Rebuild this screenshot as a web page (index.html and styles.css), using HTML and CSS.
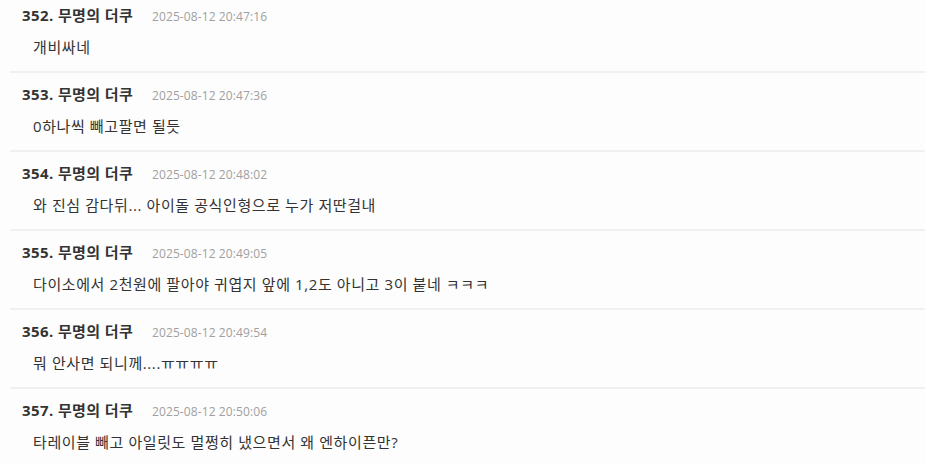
FILE: index.html
```html
<!DOCTYPE html>
<html lang="ko">
<head>
  <meta charset="UTF-8">
  <meta name="viewport" content="width=device-width, initial-scale=1.0">
  <title>댓글</title>
  <link rel="stylesheet" href="styles.css">
</head>
<body>
  <ul class="comments">
    <li class="comment">
      <div class="meta"><span class="name">352. 무명의 더쿠</span><span class="date">2025-08-12 20:47:16</span></div>
      <p class="text">개비싸네</p>
    </li>
    <li class="comment">
      <div class="meta"><span class="name">353. 무명의 더쿠</span><span class="date">2025-08-12 20:47:36</span></div>
      <p class="text">0하나씩 빼고팔면 될듯</p>
    </li>
    <li class="comment">
      <div class="meta"><span class="name">354. 무명의 더쿠</span><span class="date">2025-08-12 20:48:02</span></div>
      <p class="text">와 진심 감다뒤... 아이돌 공식인형으로 누가 저딴걸내</p>
    </li>
    <li class="comment">
      <div class="meta"><span class="name">355. 무명의 더쿠</span><span class="date">2025-08-12 20:49:05</span></div>
      <p class="text">다이소에서 2천원에 팔아야 귀엽지 앞에 1,2도 아니고 3이 붙네 ㅋㅋㅋ</p>
    </li>
    <li class="comment">
      <div class="meta"><span class="name">356. 무명의 더쿠</span><span class="date">2025-08-12 20:49:54</span></div>
      <p class="text">뭐 안사면 되니께....ㅠㅠㅠㅠ</p>
    </li>
    <li class="comment">
      <div class="meta"><span class="name">357. 무명의 더쿠</span><span class="date">2025-08-12 20:50:06</span></div>
      <p class="text">타레이블 빼고 아일릿도 멀쩡히 냈으면서 왜 엔하이픈만?</p>
    </li>
  </ul>
</body>
</html>
```

FILE: styles.css
```css
body {
  margin: 0;
  background: #fdfdfd;
  font-family: "Open Sans", "Noto Sans CJK KR", sans-serif;
  color: #333;
  overflow: hidden;
}
.comments {
  list-style: none;
  margin: -6px 0 0 10px;
  padding: 0;
}
.comment {
  padding: 11px 0 14px 12px;
  border-bottom: 2px solid #f0f0f0;
}
.meta {
  display: flex;
  align-items: baseline;
  height: 20px;
  line-height: 20px;
}
.name {
  font-size: 15px;
  font-weight: bold;
  letter-spacing: 0.4px;
  color: #333;
  width: 130px;
}
.date {
  font-size: 12px;
  letter-spacing: 0.1px;
  color: #a0a0a0;
}
.text {
  margin: 12px 0 0 11px;
  font-size: 15px;
  letter-spacing: 0.6px;
  line-height: 20px;
  color: #333;
}
```
